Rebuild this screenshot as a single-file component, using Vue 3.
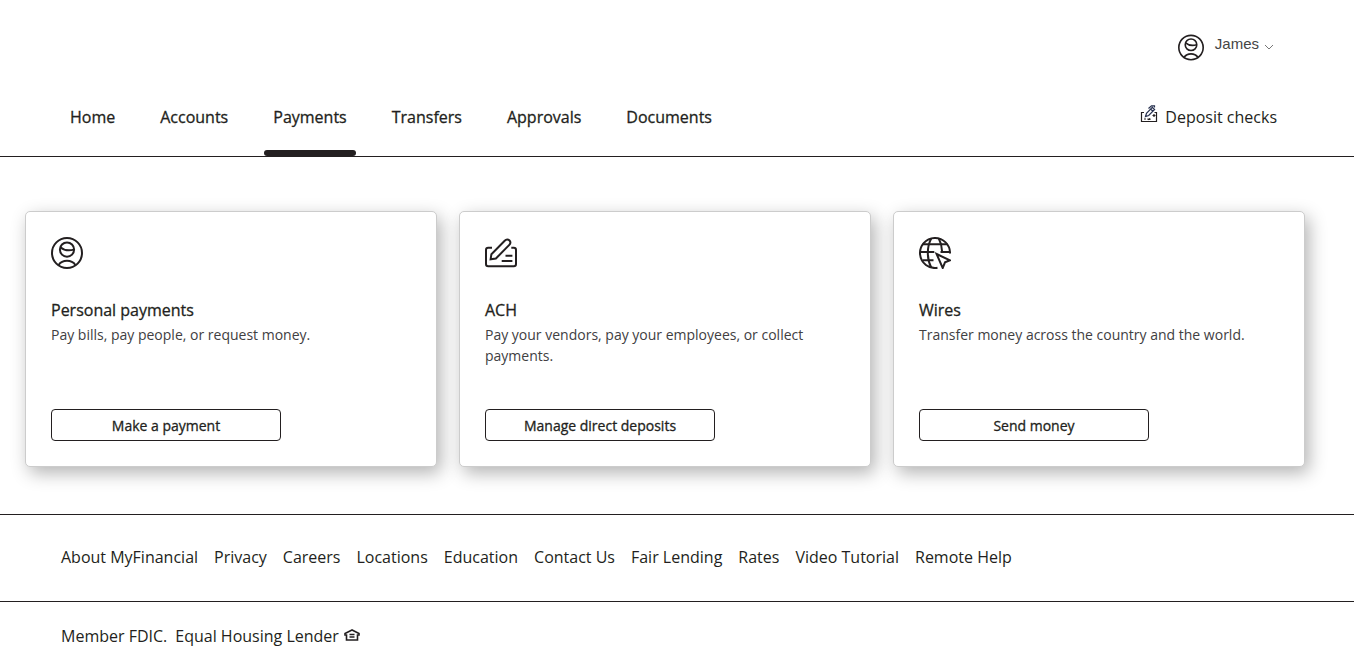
<script setup>
const navItems = ['Home', 'Accounts', 'Payments', 'Transfers', 'Approvals', 'Documents']
const activeItem = 'Payments'

const cards = [
  {
    icon: 'person',
    title: 'Personal payments',
    text: 'Pay bills, pay people, or request money.',
    action: 'Make a payment',
  },
  {
    icon: 'check',
    title: 'ACH',
    text: 'Pay your vendors, pay your employees, or collect payments.',
    action: 'Manage direct deposits',
  },
  {
    icon: 'globe',
    title: 'Wires',
    text: 'Transfer money across the country and the world.',
    action: 'Send money',
  },
]

const footerLinks = [
  'About MyFinancial',
  'Privacy',
  'Careers',
  'Locations',
  'Education',
  'Contact Us',
  'Fair Lending',
  'Rates',
  'Video Tutorial',
  'Remote Help',
]
</script>

<template>
  <div class="page">
    <header class="header">
      <div class="account-row">
        <button class="account" type="button">
          <svg class="avatar" viewBox="0 0 32 32" aria-hidden="true">
            <circle cx="16" cy="16" r="15" />
            <circle cx="16" cy="12.6" r="7.1" />
            <path d="M9.3 10.2C13 13.4 18 14 23 12.6M7.6 28C9.5 25.2 12.5 23.8 16 23.8S22.5 25.2 24.4 28" />
          </svg>
          <span class="account-name">James</span>
          <svg class="chevron" viewBox="0 0 10 6" aria-hidden="true">
            <path d="M1 1l4 4 4-4" />
          </svg>
        </button>
      </div>
      <div class="nav-row">
        <nav class="nav">
          <a
            v-for="item in navItems"
            :key="item"
            href="#"
            class="nav-link"
            :class="{ active: item === activeItem }"
          >{{ item }}</a>
        </nav>
        <a class="deposit" href="#">
          <svg class="deposit-icon" viewBox="0 0 18 18" aria-hidden="true">
            <path d="M4 7.500H1.500V16.500H16.500V7.500H14.500" />
            <path class="pen" d="M5.500 11.500L6.500 8.300L12.300 2.300L14.600 4.500L8.700 10.500ZM10.500 4L13 6.300M8.500 3.500L11.500 0.800H14.500V2.500" />
            <path d="M4 14H6M7.500 13.700l1 .8 1-.8 1 .8M14 9V12M12.500 10.500H15.500" />
          </svg>
          <span>Deposit checks</span>
        </a>
      </div>
    </header>

    <main class="cards">
      <section v-for="card in cards" :key="card.title" class="card">
        <svg v-if="card.icon === 'person'" class="card-icon" viewBox="0 0 32 32" aria-hidden="true">
          <circle cx="16" cy="16" r="15" />
          <circle cx="16" cy="12.6" r="7.1" />
          <path d="M9.3 10.2C13 13.4 18 14 23 12.6M7.6 28C9.5 25.2 12.5 23.8 16 23.8S22.5 25.2 24.4 28" />
        </svg>
        <svg v-else-if="card.icon === 'check'" class="card-icon" viewBox="0 0 32 32" aria-hidden="true">
          <path d="M7 10.8H3.2Q1 10.8 1 13V27Q1 29.2 3.2 29.2H28.8Q31 29.2 31 27V13Q31 10.8 28.8 10.8H26.3" />
          <path d="M5.6 22.3L6.4 17.2L19.7 3.7C21.2 2.2 23.2 2.2 24.5 3.5S25.7 6.5 24.3 7.9L10.9 21.5ZM20.500 18.800H27.400M16.700 24H27.400" />
        </svg>
        <svg v-else class="card-icon" viewBox="0 0 32 32" aria-hidden="true">
          <path d="M18.500 30.800A15 15 0 1 1 31 16.500" />
          <path d="M3.500 7.200H28.500M1 15H15.300M21.500 15H31M3.500 23.300H14.500" />
          <path d="M12.200 1.500C7.700 10 7.700 22 12.200 30.500M19.800 1.500C22 5.800 23.200 10.300 23 15" />
          <path d="M17.600 17L31 23.300L26 25.300L23.700 31Z" />
        </svg>
        <h2 class="card-title">{{ card.title }}</h2>
        <p class="card-text">{{ card.text }}</p>
        <button class="card-button" type="button">{{ card.action }}</button>
      </section>
    </main>

    <footer class="footer">
      <nav class="footer-links">
        <a v-for="link in footerLinks" :key="link" href="#">{{ link }}</a>
      </nav>
      <div class="legal">
        <span>Member FDIC.</span>
        <span class="lender">
          Equal Housing Lender
          <svg class="house" viewBox="0 0 16 12" aria-hidden="true">
            <path d="M8 1L1 4.500V6H2.500V11H13.500V6H15V4.500Z" />
            <path d="M5.500 5.500H10.500M5.500 8H10.500" />
          </svg>
        </span>
      </div>
    </footer>
  </div>
</template>

<style>
body {
  margin: 0;
  background: #fff;
}
</style>

<style scoped>
.page {
  color: #231f20;
  font-family: "Open Sans", "Noto Sans", sans-serif;
  font-size: 16px;
  line-height: 24px;
}

a {
  color: inherit;
  text-decoration: none;
}

svg {
  display: block;
  flex: none;
  fill: none;
  stroke: #231f20;
  stroke-width: 2;
}

.header {
  border-bottom: 1px solid #231f20;
}

.account-row {
  display: flex;
  justify-content: flex-end;
  padding: 34px 80px 0 0;
}

.account {
  display: flex;
  align-items: flex-start;
  padding: 0;
  border: 0;
  background: none;
  color: #454545;
  font-family: "Liberation Sans", Arial, sans-serif;
  font-size: 15px;
  line-height: 20px;
}

.avatar {
  width: 26px;
  height: 27px;
}

.account-name {
  margin: 0 5px 0 11px;
}

.chevron {
  width: 10px;
  height: 6px;
  margin-top: 10px;
  stroke: #777;
  stroke-width: 1;
}

.nav-row {
  display: flex;
  justify-content: space-between;
  padding: 44px 77px 0 61px;
}

.nav {
  display: flex;
  gap: 27px;
}

.nav-link {
  padding: 0 9px 27px;
  -webkit-text-stroke: 0.3px currentColor;
}

.nav-link.active {
  position: relative;
}

.nav-link.active::after {
  content: "";
  position: absolute;
  right: 0;
  bottom: 0;
  left: 0;
  height: 6px;
  border-radius: 3px;
  background: #231f20;
}

.deposit {
  display: flex;
  gap: 7px;
}

.deposit-icon {
  width: 18px;
  height: 18px;
  stroke-width: 1.2;
}

.pen {
  stroke: #26304f;
}

.cards {
  display: grid;
  grid-template-columns: repeat(3, 1fr);
  gap: 22px;
  padding: 54px 49px 47px 25px;
}

.card {
  box-sizing: border-box;
  display: flex;
  flex-direction: column;
  align-items: flex-start;
  min-height: 256px;
  padding: 25px;
  border: 1px solid #ccc;
  border-radius: 5px;
  background: #fff;
  box-shadow: 4px 6px 18px rgba(0, 0, 0, 0.3);
}

.card-icon {
  width: 32px;
  height: 32px;
  stroke-width: 2;
}

.card-title {
  margin: 29px 0 0;
  font-size: 16px;
  font-weight: 400;
  line-height: 24px;
  -webkit-text-stroke: 0.3px currentColor;
}

.card-text {
  margin: 2px 0 0;
  color: #414042;
  font-size: 14px;
  line-height: 21px;
}

.card-button {
  width: 230px;
  height: 32px;
  margin-top: auto;
  padding: 0;
  border: 1px solid #231f20;
  border-radius: 4px;
  background: #fff;
  color: #231f20;
  font-family: inherit;
  font-size: 14px;
  -webkit-text-stroke: 0.3px currentColor;
}

.footer-links {
  display: flex;
  flex-wrap: wrap;
  gap: 16px;
  padding: 30px 61px 32px;
  border-top: 1px solid #231f20;
  border-bottom: 1px solid #231f20;
}

.legal {
  display: flex;
  gap: 8px;
  padding: 22px 61px;
}

.lender {
  display: flex;
  align-items: center;
  gap: 5px;
}

.house {
  width: 16px;
  height: 12px;
  margin-bottom: 2px;
  stroke-width: 1.6;
}
</style>
